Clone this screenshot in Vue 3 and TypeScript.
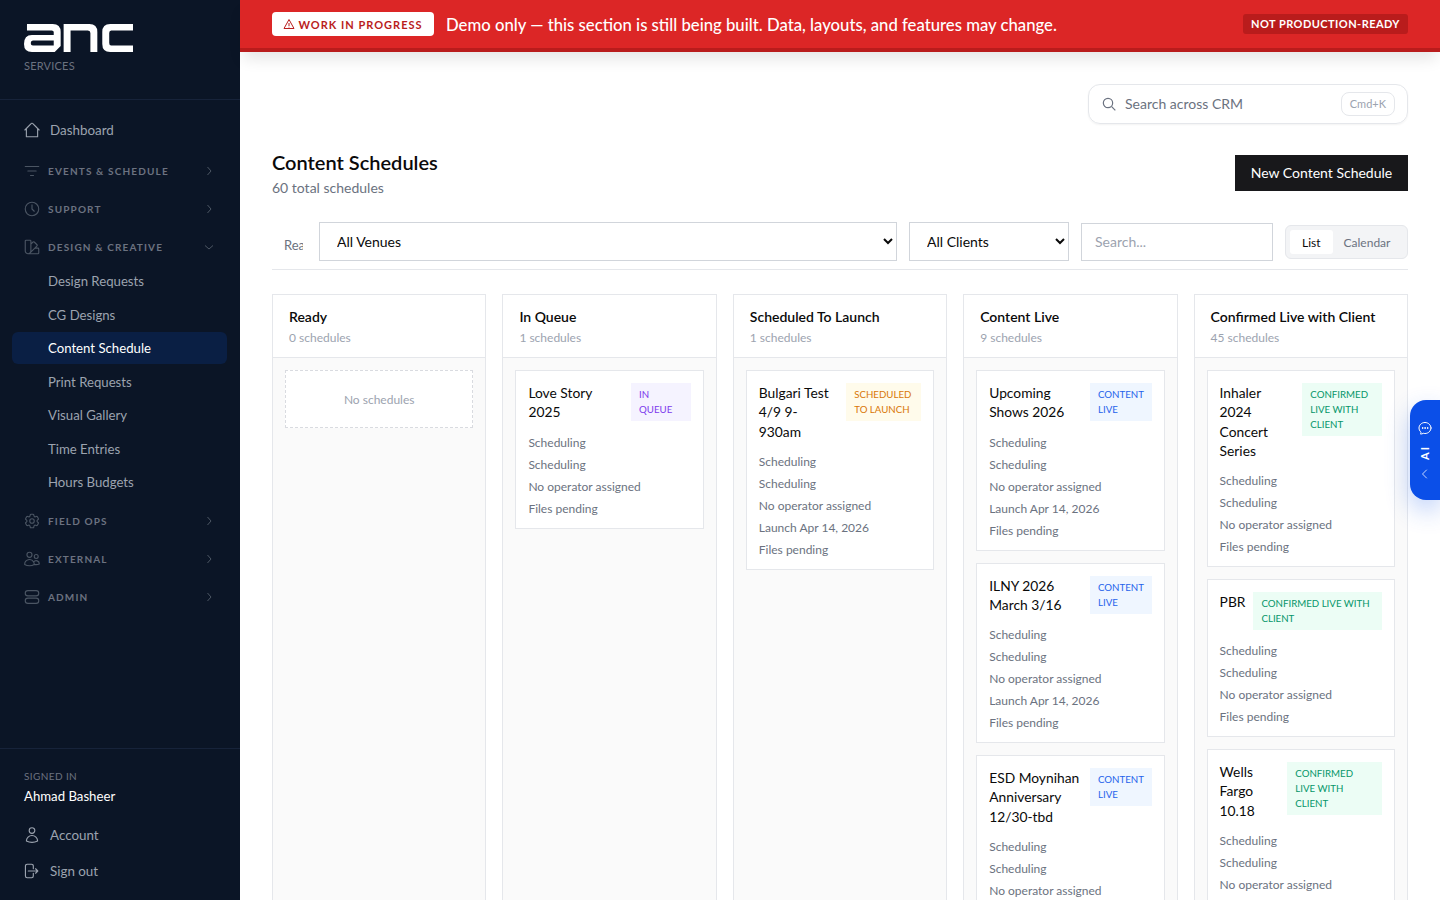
<template>
  <div class="app">
    <aside class="sidebar">
      <div class="brand">
        <svg class="logo" width="109" height="28" viewBox="0 0 110 28" preserveAspectRatio="none" fill="#fff" fill-rule="evenodd">
          <path d="M3 0H29Q37 0 37 8V22L31 28H8Q0 28 0 20Q0 11 8 11H30V8Q30 6.500 28 6.500H3ZM9 16.500H30V21.500H9Q6.800 21.500 6.800 19Q6.800 16.500 9 16.500Z" />
          <path d="M40 0H66Q74 0 74 8V28H67V9Q67 6.500 64.500 6.500H47V28H40Z" />
          <path d="M110 0V6.500H88Q86 6.500 86 9V19Q86 21.500 88 21.500H110V28H87Q79 28 79 20V8Q79 0 87 0Z" />
        </svg>
        <div class="brand-sub">SERVICES</div>
      </div>
      <nav class="nav">
        <a class="nav-link top">
          <svg class="ico" viewBox="0 0 24 24"><path d="M2.500 12 11.200 3.300a1.100 1.100 0 0 1 1.600 0L21.500 12M4.500 9.800V21H19.500V9.800" /></svg>
          Dashboard
        </a>
        <template v-for="g in navGroups" :key="g.label">
          <div class="group-head">
            <svg class="ico dim" viewBox="0 0 24 24"><path :d="g.icon" /></svg>
            <span class="group-label">{{ g.label }}</span>
            <svg class="chev" viewBox="0 0 12 12"><path :d="g.items ? 'M2 4.500l4 3.500 4-3.500' : 'M4.500 2l3.500 4-3.500 4'" /></svg>
          </div>
          <div v-if="g.items" class="sub-list">
            <a v-for="it in g.items" :key="it" class="sub-link" :class="{ active: it === 'Content Schedule' }">{{ it }}</a>
          </div>
        </template>
      </nav>
      <div class="user">
        <div class="signed">SIGNED IN</div>
        <div class="user-name">Ahmad Basheer</div>
        <a class="nav-link bottom">
          <svg class="ico" viewBox="0 0 24 24"><path d="M15.750 6a3.750 3.750 0 1 1-7.500 0 3.750 3.750 0 0 1 7.500 0ZM4.501 20.118a7.500 7.500 0 0 1 14.998 0A17.933 17.933 0 0 1 12 21.750c-2.676 0-5.216-.584-7.499-1.632Z" /></svg>
          Account
        </a>
        <a class="nav-link bottom">
          <svg class="ico" viewBox="0 0 24 24"><path transform="translate(-2 0)" d="M15.750 9V5.250A2.250 2.250 0 0 0 13.500 3h-6a2.250 2.250 0 0 0-2.250 2.250v13.500A2.250 2.250 0 0 0 7.500 21h6a2.250 2.250 0 0 0 2.250-2.250V15m3 0 3-3m0 0-3-3m3 3H9" /></svg>
          Sign out
        </a>
      </div>
    </aside>

    <div class="main">
      <div class="banner">
        <span class="wip">
          <svg width="12" height="12" viewBox="0 0 24 24"><path d="M12 3 2 21h20ZM12 10v6M12 17.500v1.500" /></svg>
          WORK IN PROGRESS
        </span>
        <span class="banner-text">Demo only — this section is still being built. Data, layouts, and features may change.</span>
        <span class="not-ready">NOT PRODUCTION-READY</span>
      </div>

      <div class="content">
        <div class="search-row">
          <div class="global-search">
            <svg width="16" height="16" viewBox="0 0 24 24"><circle cx="10.500" cy="10.500" r="7" /><path d="m16 16 5.500 5.500" /></svg>
            <span class="gs-text">Search across CRM</span>
            <span class="kbd">Cmd+K</span>
          </div>
        </div>

        <div class="page-head">
          <div>
            <h1>Content Schedules</h1>
            <p>60 total schedules</p>
          </div>
          <button class="new-btn">New Content Schedule</button>
        </div>

        <div class="filters">
          <span class="clip-label">Ready</span>
          <select class="sel venues"><option>All Venues</option></select>
          <select class="sel clients"><option>All Clients</option></select>
          <input class="search" placeholder="Search..." />
          <div class="toggle">
            <span class="tab on">List</span>
            <span class="tab">Calendar</span>
          </div>
        </div>

        <div class="board">
          <section v-for="col in columns" :key="col.title" class="column">
            <header class="col-head">
              <h2>{{ col.title }}</h2>
              <span>{{ col.count }} schedules</span>
            </header>
            <div class="col-body">
              <div v-if="!col.cards.length" class="empty">No schedules</div>
              <article v-for="c in col.cards" :key="c.name" class="card">
                <div class="card-top">
                  <div class="card-name">{{ c.name }}</div>
                  <span class="badge" :class="col.tone">{{ col.title.toUpperCase() }}</span>
                </div>
                <div class="meta">
                  <div>Scheduling</div>
                  <div>Scheduling</div>
                  <div>No operator assigned</div>
                  <div v-if="c.launch">{{ c.launch }}</div>
                  <div>Files pending</div>
                </div>
              </article>
            </div>
          </section>
        </div>
      </div>
    </div>

    <div class="ai-tab">
      <svg width="16" height="16" viewBox="0 0 24 24"><path d="M8.625 12a.375.375 0 1 1-.75 0 .375.375 0 0 1 .75 0Zm0 0H8.250m4.125 0a.375.375 0 1 1-.75 0 .375.375 0 0 1 .75 0Zm0 0H12m4.125 0a.375.375 0 1 1-.75 0 .375.375 0 0 1 .75 0Zm0 0h-.375M21 12c0 4.556-4.030 8.250-9 8.250a9.764 9.764 0 0 1-2.555-.337A5.972 5.972 0 0 1 5.410 20.970a5.969 5.969 0 0 1-.474-.065 4.480 4.480 0 0 0 .978-2.025c.090-.457-.133-.901-.467-1.226C3.930 16.178 3 14.189 3 12c0-4.556 4.030-8.250 9-8.250s9 3.694 9 8.250Z" /></svg>
      <span class="ai-label">AI</span>
      <svg class="ai-chev" width="12" height="12" viewBox="0 0 12 12"><path d="M7.500 2 3.500 6l4 4" /></svg>
    </div>
  </div>
</template>

<script setup lang="ts">
interface NavGroup {
  label: string
  icon: string
  items?: string[]
}

interface Card {
  name: string
  launch?: string
}

interface Column {
  title: string
  count: number
  tone: string
  cards: Card[]
}

const navGroups: NavGroup[] = [
  { label: 'EVENTS & SCHEDULE', icon: 'M3 6h18M6.500 12h11M10 18h4' },
  { label: 'SUPPORT', icon: 'M12 3a9 9 0 1 0 0 18 9 9 0 0 0 0-18ZM12 6.500V12l3 3' },
  {
    label: 'DESIGN & CREATIVE',
    icon: 'M4.098 19.902a3.750 3.750 0 0 0 5.304 0l6.401-6.402M6.750 21A3.750 3.750 0 0 1 3 17.250V4.125C3 3.504 3.504 3 4.125 3h5.250c.621 0 1.125.504 1.125 1.125v4.072M6.750 21a3.750 3.750 0 0 0 3.750-3.750V8.197M6.750 21h13.125c.621 0 1.125-.504 1.125-1.125v-5.250c0-.621-.504-1.125-1.125-1.125h-4.072M10.500 8.197l2.880-2.880c.438-.439 1.150-.439 1.590 0l3.712 3.713c.440.440.440 1.152 0 1.590l-2.879 2.880',
    items: [
      'Design Requests',
      'CG Designs',
      'Content Schedule',
      'Print Requests',
      'Visual Gallery',
      'Time Entries',
      'Hours Budgets',
    ],
  },
  {
    label: 'FIELD OPS',
    icon: 'M9.594 3.940c.090-.542.560-.940 1.110-.940h2.593c.550 0 1.020.398 1.110.940l.213 1.281c.063.374.313.686.645.870.074.040.147.083.220.127.325.196.720.257 1.075.124l1.217-.456a1.125 1.125 0 0 1 1.370.490l1.296 2.247a1.125 1.125 0 0 1-.260 1.431l-1.003.827c-.293.241-.438.613-.430.992a7.723 7.723 0 0 1 0 .255c-.008.378.137.750.430.991l1.004.827c.424.350.534.955.260 1.430l-1.298 2.247a1.125 1.125 0 0 1-1.369.491l-1.217-.456c-.355-.133-.750-.072-1.076.124a6.470 6.470 0 0 1-.220.128c-.331.183-.581.495-.644.869l-.213 1.281c-.090.543-.560.940-1.110.940h-2.594c-.550 0-1.019-.398-1.110-.940l-.213-1.281c-.062-.374-.312-.686-.644-.870a6.520 6.520 0 0 1-.220-.127c-.325-.196-.720-.257-1.076-.124l-1.217.456a1.125 1.125 0 0 1-1.369-.490l-1.297-2.247a1.125 1.125 0 0 1 .260-1.431l1.004-.827c.292-.240.437-.613.430-.991a6.932 6.932 0 0 1 0-.255c.007-.380-.138-.751-.430-.992l-1.004-.827a1.125 1.125 0 0 1-.260-1.430l1.297-2.247a1.125 1.125 0 0 1 1.370-.491l1.216.456c.356.133.751.072 1.076-.124.072-.044.146-.086.220-.128.332-.183.582-.495.644-.869l.214-1.280ZM15 12a3 3 0 1 1-6 0 3 3 0 0 1 6 0Z',
  },
  {
    label: 'EXTERNAL',
    icon: 'M15 19.128a9.380 9.380 0 0 0 2.625.372 9.337 9.337 0 0 0 4.121-.952 4.125 4.125 0 0 0-7.533-2.493M15 19.128v-.003c0-1.113-.285-2.160-.786-3.070M15 19.128v.106A12.318 12.318 0 0 1 8.624 21c-2.331 0-4.512-.645-6.374-1.766l-.001-.109a6.375 6.375 0 0 1 11.964-3.070M12 6.375a3.375 3.375 0 1 1-6.750 0 3.375 3.375 0 0 1 6.750 0Zm8.250 2.250a2.625 2.625 0 1 1-5.250 0 2.625 2.625 0 0 1 5.250 0Z',
  },
  {
    label: 'ADMIN',
    icon: 'M6.500 3.500h11a3.500 3.500 0 0 1 0 7h-11a3.500 3.500 0 0 1 0-7ZM6.500 13.500h11a3.500 3.500 0 0 1 0 7h-11a3.500 3.500 0 0 1 0-7Z',
  },
]

const live = 'Launch Apr 14, 2026'

const columns: Column[] = [
  { title: 'Ready', count: 0, tone: 'gray', cards: [] },
  { title: 'In Queue', count: 1, tone: 'purple', cards: [{ name: 'Love Story 2025' }] },
  {
    title: 'Scheduled To Launch',
    count: 1,
    tone: 'amber',
    cards: [{ name: 'Bulgari Test 4/9 9-930am', launch: live }],
  },
  {
    title: 'Content Live',
    count: 9,
    tone: 'blue',
    cards: [
      { name: 'Upcoming Shows 2026', launch: live },
      { name: 'ILNY 2026 March 3/16', launch: live },
      { name: 'ESD Moynihan Anniversary 12/30-tbd', launch: live },
    ],
  },
  {
    title: 'Confirmed Live with Client',
    count: 45,
    tone: 'green',
    cards: [
      { name: 'Inhaler 2024 Concert Series' },
      { name: 'PBR' },
      { name: 'Wells Fargo 10.18' },
    ],
  },
]
</script>

<style>
html,
body {
  margin: 0;
  height: 100%;
  overflow: hidden;
  background: #fff;
}
</style>

<style scoped>
.app {
  display: flex;
  height: 900px;
  overflow: hidden;
  font-family: Lato, 'Noto Sans', sans-serif;
  font-size: 14px;
  color: #0a0a0a;
  position: relative;
}

.sidebar {
  width: 240px;
  flex: none;
  display: flex;
  flex-direction: column;
  background: #0b1526;
}

.brand {
  height: 100px;
  box-sizing: border-box;
  padding: 24px 24px 0;
  border-bottom: 1px solid #17233a;
}

.logo {
  display: block;
}

.brand-sub {
  margin-top: 6px;
  font-size: 11px;
  line-height: 16px;
  letter-spacing: 0.2px;
  color: #6b7280;
}

.nav {
  flex: 1;
  padding: 13px 13px 0 12px;
}

.ico {
  width: 18px;
  height: 18px;
  margin-left: -1px;
  flex: none;
  fill: none;
  stroke: #9ca3af;
  stroke-width: 1.5;
  stroke-linecap: round;
  stroke-linejoin: round;
}

.ico.dim {
  stroke: #4b5563;
}

.nav-link {
  display: flex;
  align-items: center;
  gap: 9px;
  height: 34px;
  padding: 0 12px;
  font-size: 13.400px;
  color: #9ca3af;
}

.nav-link.top {
  margin-bottom: 5px;
}

.group-head {
  display: flex;
  align-items: center;
  height: 38px;
  padding: 0 12px;
}

.group-label {
  flex: 1;
  margin-left: 7px;
  font-size: 10px;
  font-weight: 700;
  letter-spacing: 1.150px;
  color: #6b7280;
}

.chev {
  width: 12px;
  height: 12px;
  fill: none;
  stroke: #4b5563;
  stroke-width: 1;
}

.sub-list {
  display: flex;
  flex-direction: column;
  gap: 2px;
  margin-top: -1px;
  margin-bottom: 4px;
}

.sub-link {
  height: 31.500px;
  line-height: 33px;
  padding-left: 36px;
  border-radius: 6px;
  font-size: 13.200px;
  color: #9ca3af;
}

.sub-link.active {
  background: #0a1f44;
  color: #fff;
}

.user {
  border-top: 1px solid #17233a;
  padding: 19px 24px 11px;
}

.signed {
  font-size: 10px;
  line-height: 16px;
  letter-spacing: 0.4px;
  color: #6b7280;
}

.user-name {
  margin: 3px 0 12px;
  font-size: 13.200px;
  line-height: 18px;
  color: #fff;
}

.nav-link.bottom {
  height: 36px;
  padding: 0;
}

.main {
  flex: 1;
  min-width: 0;
}

.banner {
  display: flex;
  align-items: center;
  height: 52px;
  box-sizing: border-box;
  padding: 0 32px;
  background: #dc2626;
  border-bottom: 4px solid #b91c1c;
  box-shadow: 0 10px 15px -3px rgba(0, 0, 0, 0.1);
  position: relative;
}

.wip {
  display: inline-flex;
  align-items: center;
  justify-content: center;
  gap: 3px;
  width: 162px;
  height: 24px;
  box-sizing: border-box;
  border-radius: 4px;
  background: #fff;
  color: #b91c1c;
  font-size: 11px;
  font-weight: 700;
  letter-spacing: 1px;
}

.wip svg {
  fill: none;
  stroke: #b91c1c;
  stroke-width: 2;
}

.banner-text {
  flex: 1;
  margin-left: 12px;
  padding-top: 1px;
  color: #fff;
  font-size: 16.700px;
  font-weight: 500;
}

.not-ready {
  width: 165px;
  text-align: center;
  height: 20px;
  line-height: 20px;
  border-radius: 3px;
  background: #b91c1c;
  color: #fff;
  font-size: 11px;
  font-weight: 700;
  letter-spacing: 0.450px;
}

.content {
  padding: 32px 32px 0;
}

.search-row {
  display: flex;
  justify-content: flex-end;
}

.global-search {
  display: flex;
  align-items: center;
  width: 320px;
  height: 40px;
  box-sizing: border-box;
  padding: 0 12px;
  border: 1px solid #e5e7eb;
  border-radius: 12px;
  box-shadow: 0 1px 2px rgba(0, 0, 0, 0.05);
}

.global-search svg {
  fill: none;
  stroke: #6b7280;
  stroke-width: 1.8;
}

.gs-text {
  flex: 1;
  margin-left: 8px;
  padding-bottom: 2px;
  color: #6b7280;
  font-size: 14px;
}

.kbd {
  height: 24px;
  line-height: 22px;
  box-sizing: border-box;
  padding: 0 8px;
  border: 1px solid #e5e7eb;
  border-radius: 8px;
  color: #9ca3af;
  font-size: 11px;
}

.page-head {
  display: flex;
  justify-content: space-between;
  align-items: flex-start;
  margin-top: 25px;
}

h1 {
  margin: 0;
  font-size: 20px;
  line-height: 27px;
  font-weight: 600;
  color: #0a0a0a;
}

.page-head p {
  margin: 2px 0 0;
  font-size: 14px;
  line-height: 20px;
  color: #6b7280;
}

.new-btn {
  height: 36px;
  width: 173px;
  margin-top: 6px;
  padding: 0 0 2px;
  border: none;
  background: #18181b;
  color: #fff;
  font: inherit;
  font-size: 14px;
}

.filters {
  display: flex;
  align-items: center;
  gap: 12px;
  margin-top: 24px;
  padding-bottom: 8px;
  border-bottom: 1px solid #e5e7eb;
}

.clip-label {
  flex: none;
  width: 19px;
  margin-left: 12px;
  margin-right: 4px;
  margin-top: 6px;
  overflow: hidden;
  white-space: nowrap;
  font-size: 13px;
  color: #6b7280;
}

.sel {
  height: 39px;
  box-sizing: border-box;
  padding: 0 12px 0 13px;
  border: 1px solid #d1d5db;
  background: #fff;
  border-radius: 0;
  font: inherit;
  font-size: 14px;
  color: #0a0a0a;
}

.venues {
  flex: 1;
  min-width: 0;
}

.clients {
  width: 160px;
  flex: none;
}

.search {
  width: 192px;
  flex: none;
  height: 38px;
  margin-top: 1px;
  box-sizing: border-box;
  padding: 0 12px 2px 13px;
  border: 1px solid #d1d5db;
  border-radius: 0;
  font: inherit;
  font-size: 14px;
  outline: none;
}

.search::placeholder {
  color: #9ca3af;
}

.toggle {
  display: flex;
  flex: none;
  width: 123px;
  height: 34px;
  box-sizing: border-box;
  padding: 4px;
  border: 1px solid #e5e7eb;
  border-radius: 6px;
  background: #f3f4f6;
}

.tab {
  padding: 0 11px;
  line-height: 26px;
  height: 24px;
  font-size: 12px;
  color: #6b7280;
  border-radius: 3px;
}

.tab.on {
  background: #fff;
  color: #0a0a0a;
  padding: 0 12px;
}

.board {
  display: grid;
  grid-template-columns: repeat(5, 1fr);
  gap: 16px;
  margin-top: 24px;
}

.column {
  min-width: 0;
  border: 1px solid #e5e7eb;
  background: #fafafa;
  min-height: 620px;
}

.col-head {
  height: 63px;
  box-sizing: border-box;
  padding: 12px 16px 0;
  background: #fff;
  border-bottom: 1px solid #e5e7eb;
}

.col-head h2 {
  margin: 0;
  font-size: 14px;
  line-height: 20px;
  font-weight: 600;
  color: #0a0a0a;
}

.col-head span {
  display: block;
  margin-top: 3px;
  font-size: 12px;
  line-height: 16px;
  color: #9ca3af;
}

.col-body {
  display: flex;
  flex-direction: column;
  gap: 12px;
  padding: 12px;
}

.empty {
  height: 58px;
  line-height: 57px;
  box-sizing: border-box;
  border: 1px dashed #d9dbe0;
  background: #fff;
  text-align: center;
  font-size: 12px;
  color: #9ca3af;
}

.card {
  border: 1px solid #e5e7eb;
  background: #fff;
  padding: 12px 12px 11px;
}

.card-top {
  display: flex;
  justify-content: space-between;
  align-items: flex-start;
  gap: 8px;
}

.card-name {
  font-size: 13.800px;
  line-height: 19.250px;
  color: #0a0a0a;
}

.badge {
  padding: 4px 8px;
  font-size: 9.700px;
  line-height: 15px;
}

.badge.purple {
  background: #f5f3ff;
  color: #7c3aed;
}

.badge.amber {
  background: #fffbeb;
  color: #d97706;
}

.badge.blue {
  background: #eff6ff;
  color: #2563eb;
}

.badge.green {
  background: #ecfdf5;
  color: #059669;
}

.meta {
  margin-top: 13px;
  font-size: 12px;
  line-height: 16px;
  color: #6b7280;
}

.meta div {
  margin-bottom: 6px;
}

.meta div:last-child {
  margin-bottom: 0;
}

.ai-tab {
  position: absolute;
  right: 0;
  top: 400px;
  width: 30px;
  height: 100px;
  box-sizing: border-box;
  padding-top: 20px;
  display: flex;
  flex-direction: column;
  align-items: center;
  background: #0b4fe8;
  border-radius: 16px 0 0 16px;
  box-shadow: 0 10px 25px rgba(37, 99, 235, 0.3);
}

.ai-tab svg {
  fill: none;
  stroke: #fff;
  stroke-width: 1.500;
  stroke-linecap: round;
  stroke-linejoin: round;
}

.ai-tab .ai-chev {
  margin-top: 8px;
  stroke: #c7d7fe;
  stroke-width: 1;
}

.ai-label {
  margin-top: 9px;
  writing-mode: vertical-rl;
  transform: rotate(180deg);
  color: #fff;
  font-size: 11px;
  font-weight: 700;
  letter-spacing: 2px;
  line-height: 12px;
}
</style>
